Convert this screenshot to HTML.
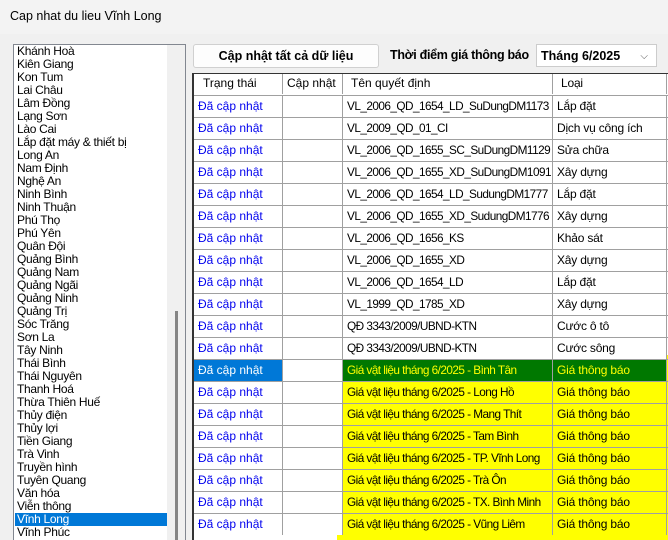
<!DOCTYPE html><html><head><meta charset="utf-8"><style>
html{overflow:hidden;height:540px}
body{margin:0;width:668px;height:540px;overflow:hidden;background:#f0f0f0;font-family:"Liberation Sans",sans-serif;font-size:12px;position:relative}
.a{position:absolute;white-space:nowrap}
#title{left:0;top:0;width:668px;height:34px;background:#f3f3f3}
#list{left:13px;top:44px;width:171px;height:500px;background:#fff;border:1px solid #828790}
.li{position:absolute;left:3px;height:13px;line-height:13px;font-size:12px;letter-spacing:-0.3px}
#grid{left:192px;top:73px;width:476px;height:467px;overflow:hidden;background:#fff;border-left:2px solid #333;border-top:1px solid #333}
.r{position:absolute;left:0;width:476px;height:22px;border-top:1px solid #a0a0a0}
.c{position:absolute;top:0;height:21px;line-height:21px;padding-left:4px;overflow:hidden;box-sizing:border-box;border-right:1px solid #a0a0a0}
.c1{left:0;width:89px;color:#0000ee}.c2{left:89px;width:60px}.c3{left:149px;width:210px;letter-spacing:-0.55px;font-size:11.8px}.c4{left:359px;width:114px;letter-spacing:-0.2px}
</style></head><body>
<div class="a" id="title"></div>
<div class="a" style="left:10px;top:9px;font-size:12.5px">Cap nhat du lieu Vĩnh Long</div>
<div class="a" id="list">
<div class="a" style="left:153px;top:0;width:18px;height:500px;background:#f0f0f0"></div>
<div class="a" style="left:161px;top:266px;width:3px;height:234px;background:#858585"></div>
<div class="a" style="left:1px;top:468px;width:152px;height:13px;background:#0078d7"></div>
</div>
<div id="items"></div>
<div class="a" style="left:193px;top:44px;width:184px;height:22px;border:1px solid #d0d0d0;border-radius:3px;background:#fdfdfd;text-align:center;line-height:22px;font-weight:bold;font-size:12.5px">Cập nhật tất cả dữ liệu</div>
<div class="a" style="left:390px;top:48px;font-weight:bold;font-size:12.5px;letter-spacing:-0.3px">Thời điểm giá thông báo</div>
<div class="a" style="left:536px;top:44px;width:121px;height:23px;border:1px solid #ccc;background:#fff;line-height:23px;font-weight:bold;font-size:12.5px;padding-left:4px;box-sizing:border-box">Tháng 6/2025<span style="position:absolute;right:8px;top:0;font-weight:normal;color:#555;font-size:10px">⌵</span></div>
<div class="a" id="grid"></div>
<script>
var L=["Khánh Hoà","Kiên Giang","Kon Tum","Lai Châu","Lâm Đồng","Lạng Sơn","Lào Cai","Lắp đặt máy & thiết bị","Long An","Nam Định","Nghệ An","Ninh Bình","Ninh Thuận","Phú Thọ","Phú Yên","Quân Đội","Quảng Bình","Quảng Nam","Quảng Ngãi","Quảng Ninh","Quảng Trị","Sóc Trăng","Sơn La","Tây Ninh","Thái Bình","Thái Nguyên","Thanh Hoá","Thừa Thiên Huế","Thủy điện","Thủy lợi","Tiền Giang","Trà Vinh","Truyền hình","Tuyên Quang","Văn hóa","Viễn thông","Vĩnh Long","Vĩnh Phúc"];
var h="";L.forEach(function(t,i){h+='<div class="li" style="left:17px;top:'+(45+i*13)+'px;'+(i==36?'color:#fff':'')+'">'+t+'</div>'});
document.getElementById('items').innerHTML=h;
var R=[["VL_2006_QD_1654_LD_SuDungDM1173","Lắp đặt"],["VL_2009_QD_01_CI","Dịch vụ công ích"],["VL_2006_QD_1655_SC_SuDungDM1129","Sửa chữa"],["VL_2006_QD_1655_XD_SuDungDM1091","Xây dựng"],["VL_2006_QD_1654_LD_SudungDM1777","Lắp đặt"],["VL_2006_QD_1655_XD_SudungDM1776","Xây dựng"],["VL_2006_QD_1656_KS","Khảo sát"],["VL_2006_QD_1655_XD","Xây dựng"],["VL_2006_QD_1654_LD","Lắp đặt"],["VL_1999_QD_1785_XD","Xây dựng"],["QĐ 3343/2009/UBND-KTN","Cước ô tô"],["QĐ 3343/2009/UBND-KTN","Cước sông"]];
["Bình Tân","Long Hồ","Mang Thít","Tam Bình","TP. Vĩnh Long","Trà Ôn","TX. Bình Minh","Vũng Liêm"].forEach(function(x){R.push(["Giá vật liệu tháng 6/2025 - "+x,"Giá thông báo",1])});
var g='<div class="a" style="left:143px;top:281px;width:340px;height:200px;background:#ff0"></div>';
g+='<div class="r" style="top:-1px;border-top:none"><div class="c c1" style="color:#000;padding-left:9px">Trạng thái</div><div class="c c2">Cập nhật</div><div class="c c3" style="padding-left:8px;letter-spacing:0;font-size:12px">Tên quyết định</div><div class="c c4" style="padding-left:8px">Loại</div></div>';
R.forEach(function(r,i){var s=i==12,y=r[2];
g+='<div class="r" style="top:'+(21+i*22)+'px;"><div class="c c1" style="background:'+(s?'#0078d7;color:#fff':'#fff')+'">Đã cập nhật</div><div class="c c2" style="background:#fff"></div><div class="c c3" style="'+(s?'background:#007800;color:#ff0':y?'':'background:#fff')+'">'+r[0]+'</div><div class="c c4" style="'+(s?'background:#007800;color:#ff0':y?'':'background:#fff')+'">'+r[1]+'</div></div>';});
document.getElementById('grid').innerHTML=g;
</script>
</body></html>
